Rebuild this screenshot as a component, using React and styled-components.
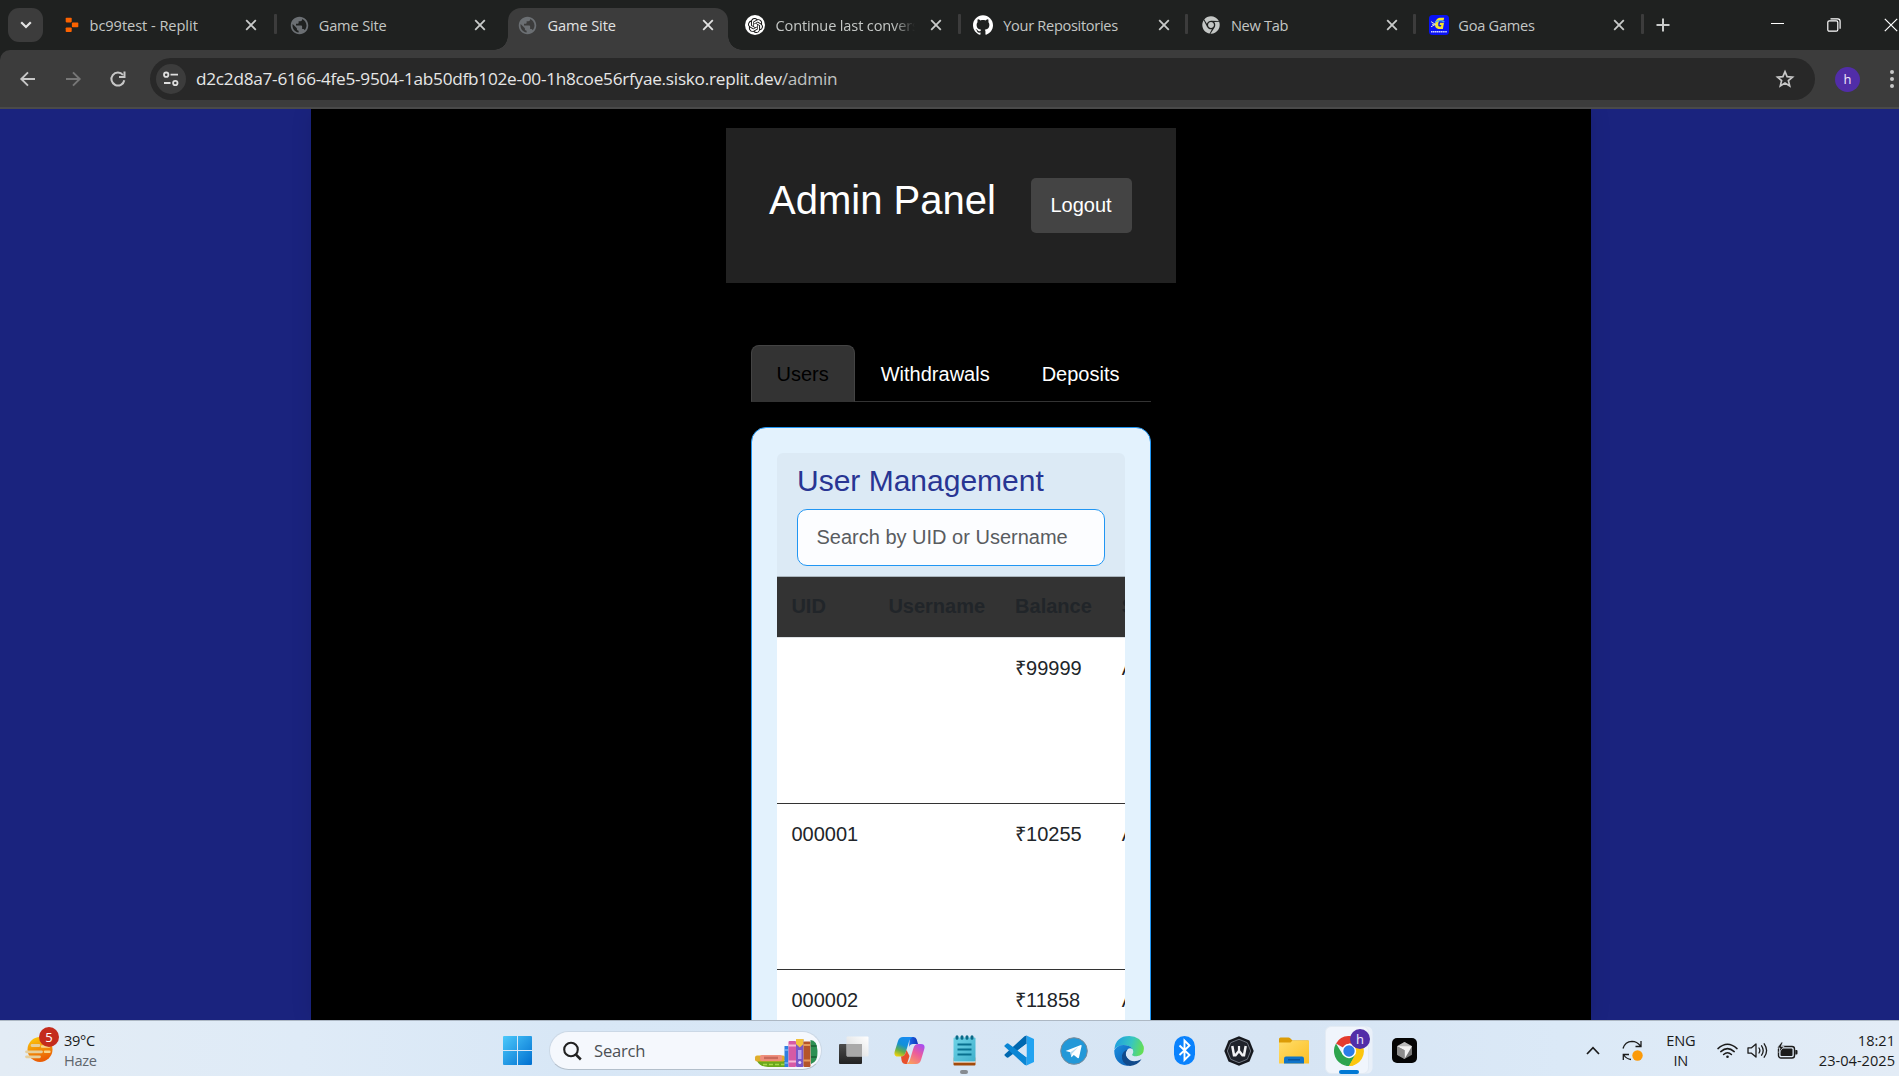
import React from "react";
import styled, { createGlobalStyle, css } from "styled-components";
import { SiGithub, SiOpenai } from "react-icons/si";
import { FaChrome } from "react-icons/fa";
import { MdPublic } from "react-icons/md";

const GlobalStyle = createGlobalStyle`
  *, *::before, *::after { box-sizing: border-box; }
  html, body { margin: 0; padding: 0; overflow: hidden; background: #1a237e; }
  svg { display: block; flex: none; }
`;

const uiFont = `"Open Sans", "Noto Sans", sans-serif`;
const pageFont = `"Liberation Sans", Arial, sans-serif`;

const Screen = styled.div`
  display: flex;
  flex-direction: column;
  width: 1899px;
  height: 1076px;
  overflow: hidden;
  font-family: ${uiFont};
`;

/* ---------- tab strip ---------- */

const TabStrip = styled.header`
  display: flex;
  flex: none;
  height: 50px;
  background: #1f2120;
  color: #c4c7c5;
`;

const TabSearch = styled.button`
  flex: none;
  width: 35px;
  height: 34px;
  margin: 8px 4.5px 0 8px;
  padding: 0;
  border: 0;
  border-radius: 11px;
  background: #3c3c3c;
  display: grid;
  place-items: center;
`;

const Tab = styled.div`
  position: relative;
  flex: none;
  width: 227.8px;
  height: 50px;
  padding: 0 15px 0 14.5px;
  display: flex;
  align-items: center;
  ${(p) =>
    p.$divider &&
    css`
      &::after {
        content: "";
        position: absolute;
        right: -2px;
        top: 14px;
        width: 3px;
        height: 20px;
        border-radius: 1px;
        background: #3c3c3c;
      }
    `}
`;

const ActiveShape = styled.div`
  position: absolute;
  left: 5px;
  right: 2.5px;
  top: 7.5px;
  bottom: 0;
  border-radius: 13px 13px 0 0;
  background: #3c3c3c;
  &::before,
  &::after {
    content: "";
    position: absolute;
    bottom: 0;
    width: 14px;
    height: 14px;
  }
  &::before {
    left: -14px;
    background: radial-gradient(circle at 0 0, transparent 13.5px, #3c3c3c 14px);
  }
  &::after {
    right: -14px;
    background: radial-gradient(circle at 100% 0, transparent 13.5px, #3c3c3c 14px);
  }
`;

const TabIcon = styled.span`
  position: relative;
  flex: none;
  width: 20px;
  height: 20px;
  margin-right: ${(p) => 9.5 + (p.$nudge || 0)}px;
  display: flex;
  align-items: center;
  justify-content: center;
`;

const TabTitle = styled.span`
  position: relative;
  flex: none;
  width: 142px;
  overflow: hidden;
  white-space: nowrap;
  font-size: 14.6px;
  line-height: 22px;
  letter-spacing: ${(p) => p.$track || 0}px;
  color: ${(p) => (p.$active ? "#e3e3e3" : "#c4c7c5")};
  ${(p) =>
    p.$fade &&
    css`
      mask-image: linear-gradient(90deg, #000 118px, transparent 140px);
    `}
`;

const TabClose = styled.span`
  position: relative;
  flex: none;
  margin-left: 13px;
`;

const NewTab = styled.span`
  flex: none;
  margin: 18px 0 0 14px;
`;

const WindowControls = styled.div`
  display: flex;
  align-items: center;
  gap: 43px;
  height: 49px;
  margin-left: 101px;
`;

/* ---------- toolbar ---------- */

const ToolbarBack = styled.div`
  flex: none;
  height: 59px;
  background: #1f2120;
`;

const Toolbar = styled.nav`
  display: flex;
  align-items: center;
  height: 59px;
  padding: 1px 0 0 19px;
  border-bottom: 2px solid #4a4a4a;
  border-radius: 10px 0 0 0;
  background: #3c3c3c;
`;

const NavIcons = styled.div`
  display: flex;
  align-items: center;
  gap: 27px;
  width: 131px;
`;

const Omnibox = styled.div`
  display: flex;
  align-items: center;
  width: 1665px;
  height: 42px;
  padding: 0 20px 0 6px;
  border-radius: 21px;
  background: #282828;
`;

const SiteChip = styled.span`
  display: grid;
  place-items: center;
  width: 30px;
  height: 30px;
  border-radius: 50%;
  background: #3c3c3c;
`;

const Url = styled.span`
  flex: 1;
  margin-left: 10px;
  font-size: 17.2px;
  line-height: 24px;
  letter-spacing: -0.25px;
  white-space: nowrap;
  color: #e6e6e6;
`;

const UrlPath = styled.span`
  color: #c0c2c1;
`;

const Avatar = styled.span`
  display: grid;
  place-items: center;
  width: ${(p) => p.$size}px;
  height: ${(p) => p.$size}px;
  border-radius: 50%;
  background: #512da8;
  color: #f0eafa;
  font-size: 13px;
  line-height: 1;
`;

const ProfileSlot = styled.div`
  display: flex;
  align-items: center;
  gap: 29px;
  margin-left: 20px;
`;

/* ---------- page ---------- */

const Viewport = styled.main`
  flex: 1;
  min-height: 0;
  display: flex;
  justify-content: center;
  padding-left: 3px;
  overflow: hidden;
  background: #1a237e;
  font-family: ${pageFont};
  font-size: 20px;
  line-height: 30px;
  color: #212529;
`;

const PageBody = styled.div`
  width: 1280px;
  padding-top: 19px;
  display: flex;
  flex-direction: column;
  align-items: center;
  background: #000;
  box-shadow: 0 0 20px rgba(0, 0, 0, 0.1);
`;

const AdminHeader = styled.section`
  flex: none;
  display: flex;
  justify-content: space-between;
  align-items: flex-start;
  width: 450px;
  height: 155px;
  padding: 50px 44px 0 43px;
  background: #222;
`;

const AdminTitle = styled.h1`
  margin: -2px 0 0;
  font-size: 40px;
  font-weight: 400;
  line-height: 48px;
  white-space: nowrap;
  color: #fff;
`;

const LogoutButton = styled.button`
  width: 101px;
  height: 55px;
  padding: 0 1px 2px 0;
  border: 0;
  border-radius: 5px;
  background: #444;
  color: #fff;
  font: inherit;
`;

const Tabs = styled.div`
  flex: none;
  display: flex;
  width: 400px;
  height: 57px;
  margin-top: 62px;
  border-bottom: 1px solid #333;
`;

const TabLink = styled.a`
  height: 57px;
  padding: 13px 25.5px 0 24.5px;
  border: 1px solid transparent;
  color: #fff;
  ${(p) =>
    p.$active &&
    css`
      border-color: #444 #444 #333;
      border-radius: 8px 8px 0 0;
      background: #333;
      color: #000;
    `}
`;

const Card = styled.section`
  flex: none;
  width: 400px;
  height: 900px;
  margin-top: 25px;
  padding: 25px;
  border: 1px solid #2196f3;
  border-radius: 15px;
  background: #e3f2fd;
`;

const CardHeader = styled.div`
  height: 124px;
  padding: 10px 20px 0;
  border-bottom: 1px solid #abb6be;
  border-radius: 6px 6px 0 0;
  background: #dceaf5;
`;

const CardTitle = styled.h2`
  margin: 0 0 10px;
  font-size: 30px;
  font-weight: 400;
  line-height: 36px;
  color: #283593;
`;

const SearchInput = styled.input`
  display: block;
  width: 308px;
  height: 57px;
  padding: 0 18.5px;
  border: 1px solid #2196f3;
  border-radius: 10px;
  outline: none;
  background: #fcfdff;
  font: inherit;
  &::placeholder {
    color: #595c5f;
    opacity: 1;
  }
`;

const TableWindow = styled.div`
  width: 348px;
  overflow: hidden;
  background: #fff;
`;

const Row = styled.div`
  display: grid;
  grid-template-columns: 97px 126.7px 106.6px 110px;
  width: 441px;
  height: ${(p) => (p.$head ? 61 : 166)}px;
  padding-top: ${(p) => (p.$head ? 14 : 15)}px;
  border-bottom: 1px solid ${(p) => (p.$head ? "#dee2e6" : "#333")};
  background: ${(p) => (p.$head ? "#333" : "#fff")};
  font-weight: ${(p) => (p.$head ? 700 : 400)};
`;

const Cell = styled.span`
  padding-left: 14.4px;
`;

/* ---------- taskbar ---------- */

const Taskbar = styled.footer`
  flex: none;
  display: flex;
  align-items: center;
  height: 56px;
  padding-top: 4px;
  border-top: 1px solid #adb8c4;
  background: linear-gradient(90deg, #e3ecf5 0, #dfebf7 300px, #d8e7f6 560px, #d7e5f4 1300px, #dbe9f7 1560px, #e3ecf6 1899px);
  color: #1b1b1b;
  font-size: 15px;
`;

const Weather = styled.div`
  display: flex;
  width: 503px;
  padding-left: 25px;
`;

const TwoLines = styled.div`
  display: flex;
  flex-direction: column;
  align-items: ${(p) => p.$align || "flex-start"};
  margin-bottom: 2px;
  font-size: 14.6px;
  line-height: 20px;
  letter-spacing: ${(p) => p.$track || 0}px;
  white-space: nowrap;
`;

const Muted = styled.span`
  color: #5f666d;
`;

const WeatherIcon = styled.div`
  position: relative;
  width: 29px;
  height: 30px;
  margin: 7px 10px 0 0;
`;

const AlertBadge = styled.span`
  position: absolute;
  left: 14px;
  top: -10px;
  width: 20px;
  height: 20px;
  border-radius: 50%;
  background: #c42b1c;
  color: #fff;
  font-size: 13px;
  line-height: 20px;
  text-align: center;
`;

const SearchPill = styled.div`
  display: flex;
  align-items: center;
  width: 273px;
  height: 39px;
  margin-left: 17px;
  padding-left: 13px;
  border: 1px solid #cbd8e6;
  border-bottom-color: #b3bfcb;
  border-radius: 20px;
  background: #f5f8fd;
  overflow: hidden;
`;

const SearchText = styled.span`
  flex: 1;
  margin-left: 12px;
  font-size: 16.6px;
  letter-spacing: -0.2px;
  color: #4c5054;
`;

const BooksSlot = styled.span`
  margin: 4px 2px 0 0;
`;

const AppRow = styled.div`
  display: flex;
  height: 55px;
  margin-left: 4.5px;
`;

const AppSlot = styled.div`
  position: relative;
  display: grid;
  place-items: center;
  width: 55px;
  height: 55px;
`;

const ActiveTile = styled.div`
  position: absolute;
  left: 3.5px;
  top: 3px;
  width: 44px;
  height: 48px;
  border-radius: 6px;
  border: 1px solid #e3ebf4;
  background: #f0f5fc;
  box-shadow: 4px 0 0 -0.5px #e9f0f9;
`;

const AppGlyph = styled.div`
  position: relative;
`;

const ProfileBadge = styled.span`
  position: absolute;
  left: 28.5px;
  top: 6px;
  border-radius: 50%;
`;

const RunMark = styled.span`
  position: absolute;
  bottom: 4px;
  left: ${(p) => (27.5 - p.$width / 2)}px;
  width: ${(p) => p.$width}px;
  height: 4px;
  border-radius: 2px;
  background: ${(p) => p.$color};
`;

const Tray = styled.div`
  display: flex;
  align-items: center;
  margin-left: auto;
  padding-right: 4px;
`;

const TrayItem = styled.div`
  margin-left: ${(p) => p.$gap}px;
`;

/* ---------- drawings ---------- */

const CrossIcon = ({ color = "#c9cbca" }) => (
  <svg width="12" height="12" viewBox="0 0 12 12" stroke={color} strokeWidth="1.8" fill="none">
    <path d="M1.2 1.2 10.8 10.8M10.8 1.2 1.2 10.8" />
  </svg>
);

const ReplitIcon = () => (
  <svg width="14" height="16" viewBox="0 0 14 16" fill="#fc6200">
    <rect x=".7" y=".8" width="6" height="4.6" rx=".8" />
    <rect x="6.9" y="5.6" width="6.4" height="4.6" rx=".8" />
    <rect x=".7" y="10.5" width="6" height="4.6" rx=".8" />
  </svg>
);

const ChatGptBadge = styled.span`
  display: grid;
  place-items: center;
  width: 20px;
  height: 20px;
  border-radius: 50%;
  background: #fff;
  color: #111;
`;

const GoaIcon = () => (
  <svg width="20" height="20" viewBox="0 0 20 20">
    <rect width="20" height="20" rx="3.5" fill="#0a12f5" />
    <path d="M15.200 2.800 14.600 5.600H11.300Q9.600 6 9.200 8.600 8.900 11.300 10.300 11.600H12L12.300 10H10.600L11 7.800H15L13.900 13.900H9.300Q5.500 13.600 6.100 8.600 6.800 3.400 10.800 2.800z" fill="#f4e52a" />
    <path d="M2 6.600 6.500 9.400 2 11.800M3 9.300h4" stroke="#d8dccb" strokeWidth="1" fill="none" />
    <path d="M6 7.200Q10 4 15.500 7" stroke="#4fb4f0" strokeWidth="1.200" fill="none" />
    <path d="M2 16.700h16" stroke="#cfd4ff" strokeWidth="1.600" strokeDasharray="1.500 .4" />
  </svg>
);

const BackIcon = ({ color, flip }) => (
  <svg width="18" height="18" viewBox="0 0 18 18" fill="none" stroke={color} strokeWidth="1.9" transform={flip ? "scale(-1 1)" : undefined}>
    <path d="M16 9H2.5M9 2.300 2.300 9 9 15.700" />
  </svg>
);

const ReloadIcon = () => (
  <svg width="18" height="18" viewBox="0 0 18 18" fill="none" stroke="#c7c7c7" strokeWidth="2">
    <path d="M15.300 10.200A6.500 6.500 0 1 1 14 5" />
    <path d="M15.500 1.500V7H10" />
  </svg>
);

const TuneIcon = () => (
  <svg width="18" height="16" viewBox="0 0 18 16" fill="none" stroke="#dedede" strokeWidth="1.8">
    <circle cx="4.200" cy="3.700" r="2.200" />
    <path d="M8.500 3.700H16M2 12h6.500" />
    <circle cx="13.300" cy="12" r="2.200" />
  </svg>
);

const StarIcon = () => (
  <svg width="20" height="20" viewBox="0 0 20 20" fill="none" stroke="#c7c7c7" strokeWidth="1.7">
    <path d="m10 2.600 2.100 5 5.400.5-4.100 3.500 1.300 5.300L10 14.100l-4.700 2.800 1.300-5.300-4.100-3.500 5.400-.5z" />
  </svg>
);

const HazeIcon = () => (
  <svg width="29" height="30" viewBox="0 0 29 30">
    <defs>
      <linearGradient id="haze" x1="0" y1="0" x2=".3" y2="1">
        <stop offset="0" stopColor="#fdd00c" />
        <stop offset="1" stopColor="#ea5e05" />
      </linearGradient>
    </defs>
    <circle cx="15" cy="12.500" r="12.500" fill="url(#haze)" />
    <path d="M7 8.500h7M1.500 14.800h15M1.500 19.800h13" stroke="#e6cf9c" strokeWidth="2.800" strokeLinecap="round" />
    <path d="M20 14.800h4.500M17 9.500h7" stroke="#f7d58a" strokeWidth="2.400" strokeLinecap="round" />
  </svg>
);

const WindowsIcon = () => (
  <svg width="29" height="29" viewBox="0 0 29 29">
    <defs>
      <linearGradient id="win" x1="0" y1="0" x2="1" y2="1">
        <stop offset="0" stopColor="#4cc9fb" />
        <stop offset="1" stopColor="#006fd0" />
      </linearGradient>
    </defs>
    <path fill="url(#win)" d="M1 0h13v14H0V1a1 1 0 0 1 1-1zM15 0h13a1 1 0 0 1 1 1v13H15zM0 15h14v14H1a1 1 0 0 1-1-1zM15 15h14v13a1 1 0 0 1-1 1H15z" />
  </svg>
);

const LensIcon = () => (
  <svg width="19" height="20" viewBox="0 0 19 20" fill="none" stroke="#222" strokeWidth="2.100">
    <circle cx="8" cy="8.500" r="6.800" />
    <path d="m12.800 13.500 5 5" strokeWidth="2.500" />
  </svg>
);

const BooksIcon = () => (
  <svg width="65" height="30" viewBox="0 0 65 30">
    <path d="M3 23h30v6H14Q6 29 3 23z" fill="#6aa81e" />
    <path d="M9 26.500h22" stroke="#a8d84a" strokeWidth="1.500" strokeDasharray="4 2" />
    <rect x="1" y="17.500" width="30" height="6" rx="2" fill="#e0ad2c" />
    <rect x="6" y="17" width="22" height="6" rx="2" fill="#ef8f7d" />
    <rect x="10" y="18.700" width="14" height="2.400" fill="#c96a5c" />
    <rect x="30.500" y="8" width="4" height="21" fill="#2f7fe0" />
    <path d="M30.500 12h4M30.500 25h4" stroke="#9fd0ff" />
    <rect x="34.500" y="3" width="7.500" height="26" rx="1" fill="#d65aa5" />
    <path d="M34.500 7.500H42M34.500 23.500H42" stroke="#f6b7d8" strokeWidth="2" />
    <rect x="42" y="1" width="7.500" height="28" rx="1" fill="#7a58c8" />
    <path d="M42 1h7.500v5l-3.700 3.500L42 6z" fill="#f2c23c" />
    <rect x="44" y="12" width="3.500" height="9" fill="#b9a2ee" />
    <circle cx="45.800" cy="24.500" r="1.500" fill="#e8dcff" />
    <rect x="49.500" y="3.500" width="7" height="25.500" rx="1" fill="#b4552a" />
    <path d="M49.500 7h7M49.500 22.500h7" stroke="#e59a5c" strokeWidth="2" />
    <path d="M56.500 2Q63 2 63.500 13T57 26z" fill="#2c8f52" />
    <path d="M57 8h5.500M57 19h5.500" stroke="#1c6a3a" strokeWidth="2" />
  </svg>
);

const TaskViewIcon = () => (
  <svg width="30" height="29" viewBox="0 0 30 29">
    <defs>
      <linearGradient id="tvd" x1="0" y1="0" x2="0" y2="1"><stop offset="0" stopColor="#4c4c4c" /><stop offset="1" stopColor="#222" /></linearGradient>
      <linearGradient id="tvl" x1="1" y1="0" x2="0" y2="1"><stop offset="0" stopColor="#fff" /><stop offset="1" stopColor="#d5d8da" /></linearGradient>
    </defs>
    <rect x="0" y="8" width="23" height="20" rx="1" fill="url(#tvd)" />
    <rect x="7.500" y=".5" width="22" height="20" rx="1" fill="url(#tvl)" />
    <path d="M8 8h15v12.300H8z" fill="#a9a9a9" />
  </svg>
);

const CopilotIcon = () => (
  <svg width="31" height="29" viewBox="0 0 31 29">
    <defs>
      <linearGradient id="cp1" x1=".6" y1="0" x2=".2" y2="1"><stop offset="0" stopColor="#178cf0" /><stop offset=".4" stopColor="#1390d8" /><stop offset=".7" stopColor="#65ae4a" /><stop offset="1" stopColor="#f2d20a" /></linearGradient>
      <linearGradient id="cp2" x1=".8" y1="0" x2=".2" y2="1"><stop offset="0" stopColor="#a84df0" /><stop offset=".45" stopColor="#ec5c9b" /><stop offset="1" stopColor="#fba05a" /></linearGradient>
      <linearGradient id="cp3" x1="0" y1="0" x2="1" y2="0"><stop offset="0" stopColor="#1a6ae8" /><stop offset="1" stopColor="#1033b8" /></linearGradient>
    </defs>
    <path d="M16 1h3.500q2.500 0 3.200 2.600L24 8h-5q-3 0-4 3z" fill="url(#cp3)" />
    <path d="M9 1h9.500q-2.500 1-3.500 4.500L11.500 17q-1.200 3.500-4.500 3.500H4q-4.500 0-3.300-5L4 5Q5.200 1 9 1z" fill="url(#cp1)" />
    <path d="M7 20.500q3.300 0 4.500-3.500l1-3 3 6-2.500 8h-1.500q-3 0-3.800-3z" fill="#e8502c" />
    <path d="M22 28h-9.500q2.500-1 3.500-4.500L19.500 12q1.200-4 4.500-4h3q4.500 0 3.300 5L27 24q-1.200 4-5 4z" fill="url(#cp2)" />
  </svg>
);

const NotepadIcon = () => (
  <svg width="23" height="31" viewBox="0 0 23 31">
    <defs><linearGradient id="np" x1="0" y1="0" x2="1" y2="1"><stop offset="0" stopColor="#6fd3e6" /><stop offset="1" stopColor="#3fb0cc" /></linearGradient></defs>
    <rect x=".5" y="22" width="22" height="8.500" rx="1" fill="#a34a0a" />
    <rect x=".5" y="22" width="22" height="5.600" fill="#f8f4ef" />
    <rect x=".5" y="2.500" width="22" height="24" rx="1" fill="url(#np)" />
    <path d="M4.500 9.500h14M4.500 14.500h14M4.500 19.500h14" stroke="#08708f" strokeWidth="2" />
    <path d="M4 1.800v1.400M9 1.800v1.400M14 1.800v1.400M19 1.800v1.400" stroke="#0b6a88" strokeWidth="3" strokeLinecap="round" />
  </svg>
);

const CodeIcon = () => (
  <svg width="31" height="31" viewBox="0 0 31 31">
    <path d="M22.500.5 30 4v23l-7.500 3.500z" fill="#22a3f1" />
    <path d="M22.500.5v8.300L4.300 22.500Q3.300 23 2.500 22.300L.8 20.700Q0 20 .8 19.200L20.500 1.300z" fill="#0068b0" />
    <path d="M22.500 30.500v-8.300L4.300 8.500Q3.300 8 2.500 8.700L.8 10.300Q0 11 .8 11.800L20.500 29.700z" fill="#0a86d4" />
    <path d="M22.500 8.800v13.400L13.700 15.500z" fill="#d8e6f5" />
  </svg>
);

const TelegramIcon = () => (
  <svg width="28" height="28" viewBox="0 0 28 28">
    <circle cx="14" cy="14" r="13.300" fill="#2398d8" stroke="#7b8b99" strokeWidth="1" />
    <path d="M5.500 13.900 20.800 8q1-.3.800.9l-2.600 11.600q-.3 1.200-1.400.5l-3.800-2.900-2 1.900q-.5.400-.6-.4l-.9-4.300-4.600-1.400z" fill="#fff" />
    <path d="m10.300 15.300 8-5.200-6.300 6.600-.5 3.100z" fill="#b9dcf0" />
  </svg>
);

const EdgeIcon = () => (
  <svg width="30" height="30" viewBox="0 0 30 30">
    <defs>
      <linearGradient id="eg1" x1="0" y1=".4" x2="1" y2=".6"><stop offset="0" stopColor="#1f9fe0" /><stop offset=".55" stopColor="#38c6c0" /><stop offset="1" stopColor="#66e04f" /></linearGradient>
      <linearGradient id="eg2" x1="0" y1="0" x2="1" y2="1"><stop offset="0" stopColor="#1b8fe0" /><stop offset="1" stopColor="#0b57ad" /></linearGradient>
    </defs>
    <path d="M.3 13.500Q1.800 0 15.300 0 26.500.300 29.700 10.500q1.300 9.300-7.200 9.700-4.600.1-4.300-1.700 1.800-2 .5-5Q16 9 9.500 9 3 9.500.3 13.500z" fill="url(#eg1)" />
    <path d="M.2 14.500Q3 9 9.500 9 16 9 18.500 13q-3-1.500-5 .5-3 3.500-1 7.500 2.500 5 7.500 6-4 3-7 2.800Q.5 28 .2 14.500z" fill="url(#eg2)" />
    <path d="M13.500 13.500q-3 3.500-1 7.500 5 7 15 2.300Q23.500 29.500 16 30 7 28 8 19.500q1-4.500 5.500-6z" fill="#114a8b" />
  </svg>
);

const BluetoothIcon = () => (
  <svg width="21" height="29" viewBox="0 0 21 29">
    <rect width="21" height="29" rx="10.500" fill="#0a82fd" />
    <path d="m5.500 9.500 10 9.500-5 5V4.500l5 5-10 9.500" fill="none" stroke="#fff" strokeWidth="1.900" />
  </svg>
);

const OctagonIcon = () => (
  <svg width="30" height="30" viewBox="0 0 30 30">
    <path d="M15 .3 25.500 4.500 29.700 15 25.500 25.500 15 29.700 4.500 25.500.3 15 4.500 4.500z" fill="#16181e" />
    <path d="M15 3.300 23.300 6.700 26.700 15 23.300 23.300 15 26.700 6.700 23.300 3.300 15 6.700 6.700z" fill="#20232b" stroke="#6e737d" strokeWidth="1" />
    <path d="M8.300 10 10 19.300h1.500L15 15l3.500 4.300H20L21.700 10" fill="none" stroke="#f2f2f4" strokeWidth="2.500" />
    <path d="M15 10v5" stroke="#f2f2f4" strokeWidth="2.200" />
  </svg>
);

const FolderIcon = () => (
  <svg width="30" height="27" viewBox="0 0 30 27">
    <defs><linearGradient id="fo" x1="0" y1="0" x2="1" y2="1"><stop offset="0" stopColor="#ffdd6a" /><stop offset="1" stopColor="#fcbf24" /></linearGradient></defs>
    <path d="M1.500.5h8q1 0 1.700.7L13.500 3.500H29q1 0 1 1V12H0V2Q0 .5 1.500.5z" fill="#dc9c06" />
    <path d="M11.500 5.500 13.500 3.500H29q1 0 1 1V26.500H0V5.500z" fill="url(#fo)" />
    <path d="M5 26.500v-5q0-2 2-2h16q2 0 2 2v5z" fill="#0f74c9" />
    <path d="M9 22.800h12" stroke="#0a4f94" strokeWidth="1.300" />
  </svg>
);

const ChromeIcon = () => (
  <svg width="30" height="30" viewBox="0 0 30 30">
    <path d="M15 15 2 7.500A15 15 0 0 1 28 7.500H15z" fill="#e33b2e" />
    <path d="M15 8h13.200A15 15 0 0 1 15 30l6-11z" fill="#fcc60d" />
    <path d="M2 7.500 9 19l6 3.500-4 7A15 15 0 0 1 2 7.500z" fill="#2da44e" />
    <path d="M8.500 18.500 15 22.300 21.500 18.500 15.200 30Q12.500 30 11 29.500L12 22z" fill="#2da44e" />
    <path d="m21.500 18.500-6.500 11.500q4 0 6-1.500L25 18z" fill="#fcc60d" />
    <circle cx="15" cy="15" r="7.200" fill="#fff" />
    <circle cx="15" cy="15" r="5.700" fill="#2b7de9" />
  </svg>
);

const CursorIcon = () => (
  <svg width="25" height="25" viewBox="0 0 25 25">
    <rect width="25" height="25" rx="5" fill="#050505" />
    <path d="m12.500 4 7.500 4.200v8.600L12.500 21 5 16.800V8.200z" fill="#777" />
    <path d="M5 8.200 12.500 4 20 8.200l-7.500 3z" fill="#b9b9b9" />
    <path d="M5 8.200h15L12.500 21v-8.800z" fill="#f1f1f1" />
    <path d="m5 8.200 7.500 4V21L5 16.800z" fill="#8d8d8d" />
  </svg>
);

const SyncIcon = () => (
  <svg width="21" height="21" viewBox="0 0 21 21" fill="none" stroke="#1b1b1b" strokeWidth="1.300">
    <path d="M1 8.500Q3 1.500 10 1.300q5 0 8.500 4.500M19 1v5.500h-5.500M9 19.500Q4.500 19 1.800 15M1.300 20v-5.500H7" />
    <circle cx="15.500" cy="15.500" r="5.200" fill="#fb9a0a" stroke="none" />
  </svg>
);

const WifiIcon = () => (
  <svg width="21" height="16" viewBox="0 0 21 16" fill="none" stroke="#1b1b1b" strokeWidth="1.500" strokeLinecap="round">
    <path d="M1 5.600Q10.500-3 20 5.600M3.800 8.600q6.700-6 13.400 0M6.600 11.500q3.900-3.500 7.800 0" />
    <circle cx="10.500" cy="13.700" r="1.300" fill="#1b1b1b" stroke="none" />
  </svg>
);

const SpeakerIcon = () => (
  <svg width="21" height="17" viewBox="0 0 21 17" fill="none" stroke="#1b1b1b" strokeWidth="1.300" strokeLinecap="round" strokeLinejoin="round">
    <path d="M1 5.800v5.400h3.500L9 15V2L4.500 5.800zM12 6q1.700 2.500 0 5M14.600 3.800q3.200 4.700 0 9.400M17.200 1.800q4.800 6.700 0 13.400" />
  </svg>
);

const BatteryIcon = () => (
  <svg width="21" height="18" viewBox="0 0 21 18">
    <rect x="1.500" y="4.500" width="16" height="11.500" rx="2.500" fill="none" stroke="#1b1b1b" strokeWidth="1.400" />
    <rect x="3.500" y="6.500" width="12" height="7.500" rx="1" fill="#1b1b1b" />
    <path d="M18.300 8h1.200q1 0 1 1v2.500q0 1-1 1h-1.200z" fill="#1b1b1b" />
    <path d="M4.500 0 0 6h3L2 10.500 7 4.500H4.200L6 0z" fill="#1b1b1b" stroke="#e1ebf6" strokeWidth=".7" />
  </svg>
);

/* ---------- data ---------- */

const browserTabs = [
  { title: "bc99test - Replit", icon: <ReplitIcon />, divider: true, track: -0.05, nudge: -2 },
  { title: "Game Site", icon: <MdPublic size={21} color="#6b6f73" />, track: -0.15, nudge: -0.6 },
  { title: "Game Site", icon: <MdPublic size={21} color="#6b6f73" />, active: true, track: -0.1, nudge: 0.4 },
  { title: "Continue last conversation", icon: <ChatGptBadge><SiOpenai size={15} /></ChatGptBadge>, divider: true, fade: true, track: -0.15, nudge: 0.6 },
  { title: "Your Repositories", icon: <SiGithub size={20} color="#fff" />, divider: true, track: -0.32, nudge: 0.6 },
  { title: "New Tab", icon: <FaChrome size={18} color="#c4c7c5" />, divider: true, track: -0.3, nudge: 0.4 },
  { title: "Goa Games", icon: <GoaIcon />, divider: true, track: -0.25 },
];

const users = [
  { uid: "", username: "", balance: "₹99999", status: "Active" },
  { uid: "000001", username: "", balance: "₹10255", status: "Active" },
  { uid: "000002", username: "", balance: "₹11858", status: "Active" },
];

const apps = [
  { name: "taskview", icon: <TaskViewIcon /> },
  { name: "copilot", icon: <CopilotIcon /> },
  { name: "notepad", icon: <NotepadIcon />, mark: [8, "#868b91"] },
  { name: "code", icon: <CodeIcon /> },
  { name: "telegram", icon: <TelegramIcon /> },
  { name: "edge", icon: <EdgeIcon /> },
  { name: "bluetooth", icon: <BluetoothIcon /> },
  { name: "octagon", icon: <OctagonIcon /> },
  { name: "folder", icon: <FolderIcon /> },
  { name: "chrome", icon: <ChromeIcon />, active: true, mark: [20, "#0078d4"] },
  { name: "cursor", icon: <CursorIcon /> },
];

const BrowserTab = ({ tab }) => (
  <Tab $divider={tab.divider}>
    {tab.active && <ActiveShape />}
    <TabIcon $nudge={tab.nudge}>{tab.icon}</TabIcon>
    <TabTitle $active={tab.active} $fade={tab.fade} $track={tab.track}>{tab.title}</TabTitle>
    <TabClose><CrossIcon color={tab.active ? "#e3e3e3" : "#c9cbca"} /></TabClose>
  </Tab>
);

export default function App() {
  return (
    <Screen>
      <GlobalStyle />
      <TabStrip>
        <TabSearch>
          <svg width="12" height="8" viewBox="0 0 12 8" fill="none" stroke="#e3e3e3" strokeWidth="2.200"><path d="m1.200 1.200 4.800 4.800 4.800-4.800" /></svg>
        </TabSearch>
        {browserTabs.map((tab, i) => <BrowserTab key={i} tab={tab} />)}
        <NewTab>
          <svg width="14" height="14" viewBox="0 0 14 14" stroke="#c9cbca" strokeWidth="2"><path d="M7 .5v13M.5 7h13" /></svg>
        </NewTab>
        <WindowControls>
          <svg width="13" height="13" viewBox="0 0 13 13" stroke="#fff" strokeWidth="1"><path d="M0 5.500h13" /></svg>
          <svg width="14" height="14" viewBox="0 0 14 14" fill="none" stroke="#fff" strokeWidth="1.200">
            <rect x=".8" y="2.800" width="10" height="10.400" rx="1.500" />
            <path d="M3.500.9h7.300q2.300 0 2.300 2.300v7.500" />
          </svg>
          <svg width="14" height="14" viewBox="0 0 14 14" stroke="#fff" strokeWidth="1.200"><path d="m.8.8 12.400 12.400M13.200.8.800 13.200" /></svg>
        </WindowControls>
      </TabStrip>

      <ToolbarBack>
        <Toolbar>
          <NavIcons>
            <BackIcon color="#c7c7c7" />
            <BackIcon color="#777" flip />
            <ReloadIcon />
          </NavIcons>
          <Omnibox>
            <SiteChip><TuneIcon /></SiteChip>
            <Url>d2c2d8a7-6166-4fe5-9504-1ab50dfb102e-00-1h8coe56rfyae.sisko.replit.dev<UrlPath>/admin</UrlPath></Url>
            <StarIcon />
          </Omnibox>
          <ProfileSlot>
            <Avatar $size={25}>h</Avatar>
            <svg width="6" height="20" viewBox="0 0 6 20" fill="#c7c7c7"><circle cx="3" cy="3" r="2" /><circle cx="3" cy="10" r="2" /><circle cx="3" cy="17" r="2" /></svg>
          </ProfileSlot>
        </Toolbar>
      </ToolbarBack>

      <Viewport>
        <PageBody>
          <AdminHeader>
            <AdminTitle>Admin Panel</AdminTitle>
            <LogoutButton>Logout</LogoutButton>
          </AdminHeader>
          <Tabs>
            <TabLink $active>Users</TabLink>
            <TabLink>Withdrawals</TabLink>
            <TabLink>Deposits</TabLink>
          </Tabs>
          <Card>
            <CardHeader>
              <CardTitle>User Management</CardTitle>
              <SearchInput placeholder="Search by UID or Username" />
            </CardHeader>
            <TableWindow>
              <Row $head>
                <Cell>UID</Cell><Cell>Username</Cell><Cell>Balance</Cell><Cell>Status</Cell>
              </Row>
              {users.map((u, i) => (
                <Row key={i}>
                  <Cell>{u.uid}</Cell><Cell>{u.username}</Cell><Cell>{u.balance}</Cell><Cell>{u.status}</Cell>
                </Row>
              ))}
            </TableWindow>
          </Card>
        </PageBody>
      </Viewport>

      <Taskbar>
        <Weather>
          <WeatherIcon>
            <HazeIcon />
            <AlertBadge>5</AlertBadge>
          </WeatherIcon>
          <TwoLines $track={-0.3}><span>39°C</span><Muted>Haze</Muted></TwoLines>
        </Weather>
        <WindowsIcon />
        <SearchPill>
          <LensIcon />
          <SearchText>Search</SearchText>
          <BooksSlot><BooksIcon /></BooksSlot>
        </SearchPill>
        <AppRow>
          {apps.map((a) => (
            <AppSlot key={a.name}>
              {a.active && <ActiveTile />}
              <AppGlyph>{a.icon}</AppGlyph>
              {a.active && <ProfileBadge><Avatar $size={20}>h</Avatar></ProfileBadge>}
              {a.mark && <RunMark $width={a.mark[0]} $color={a.mark[1]} />}
            </AppSlot>
          ))}
        </AppRow>
        <Tray>
          <svg width="14" height="9" viewBox="0 0 14 9" fill="none" stroke="#1b1b1b" strokeWidth="1.700"><path d="m1 8 6-6.300L13 8" /></svg>
          <TrayItem $gap={22.5}><SyncIcon /></TrayItem>
          <TrayItem $gap={23}><TwoLines $align="center" $track={-0.2}><span>ENG</span><span>IN</span></TwoLines></TrayItem>
          <TrayItem $gap={22}><WifiIcon /></TrayItem>
          <TrayItem $gap={9}><SpeakerIcon /></TrayItem>
          <TrayItem $gap={9}><BatteryIcon /></TrayItem>
          <TrayItem $gap={20.5}><TwoLines $align="flex-end"><span>18:21</span><span>23-04-2025</span></TwoLines></TrayItem>
        </Tray>
      </Taskbar>
    </Screen>
  );
}
